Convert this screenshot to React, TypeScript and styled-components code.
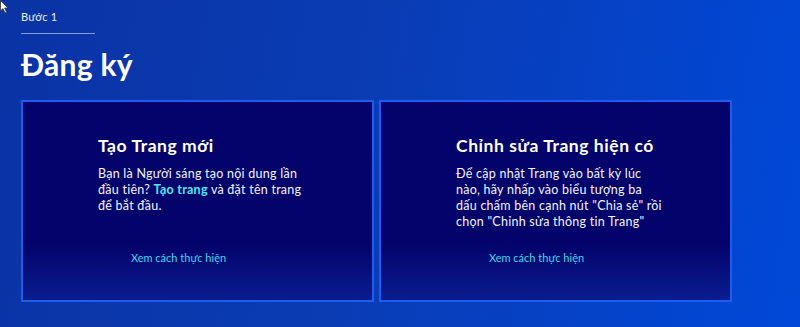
import React from 'react';
import styled, { createGlobalStyle } from 'styled-components';

const GlobalStyle = createGlobalStyle`
  html, body {
    margin: 0;
    padding: 0;
    height: 100%;
  }
  body {
    font-family: 'Lato', 'Noto Sans', sans-serif;
    -webkit-font-smoothing: antialiased;
  }
`;

const Page = styled.div`
  position: relative;
  width: 800px;
  height: 327px;
  overflow: hidden;
  box-sizing: border-box;
  padding: 10px 0 0 21px;
  color: #ffffff;
  background: linear-gradient(100deg, #0a33a4 0%, #0a3cb4 45%, #0048d8 100%);
`;

const Cursor = styled.svg`
  position: absolute;
  left: 0;
  top: 0;
`;

const StepLabel = styled.div`
  font-size: 11px;
  line-height: 14px;
  letter-spacing: 0.2px;
  color: #e8eeff;
`;

const Rule = styled.div`
  width: 74px;
  height: 1px;
  margin-top: 9px;
  background: rgba(200, 215, 255, 0.65);
`;

const Heading = styled.h1`
  margin: 10px 0 0;
  font-size: 30px;
  line-height: 40px;
  font-weight: 700;
  letter-spacing: 0.3px;
`;

const CardRow = styled.div`
  display: flex;
  gap: 5px;
  margin-top: 16px;
`;

const Card = styled.section`
  display: flex;
  flex-direction: column;
  box-sizing: border-box;
  width: 353px;
  height: 202px;
  padding: 33px 20px 35px 75px;
  border: 2px solid #1d5cf0;
  background: linear-gradient(180deg, #03036b 0%, #03036b 72%, #0a1c8e 100%);
`;

const CardTitle = styled.h2`
  margin: 0;
  font-size: 17.5px;
  line-height: 22px;
  font-weight: 700;
  letter-spacing: 0.55px;
`;

const CardText = styled.p`
  margin: 9px 0 0;
  max-width: 207px;
  font-size: 12.5px;
  line-height: 16px;
  letter-spacing: 0.25px;
  color: #f2f4ff;
`;

const Highlight = styled.span`
  color: #4fe8ef;
  font-weight: 700;
`;

const HowLink = styled.a<{ $indent: number }>`
  margin-top: auto;
  padding-left: ${p => p.$indent}px;
  font-size: 11px;
  line-height: 14px;
  color: #3fd6e6;
  text-decoration: none;
`;

const App: React.FC = () => (
  <>
    <GlobalStyle />
    <Page>
      <Cursor width="10" height="14" viewBox="0 0 10 14">
        <path d="M0.5 0.5 L0.5 11 L3 8.6 L5 13 L6.6 12.3 L4.7 8 L8 8 Z" fill="#ffffff" stroke="#333" strokeWidth="0.8" />
      </Cursor>
      <StepLabel>Bước 1</StepLabel>
      <Rule />
      <Heading>Đăng ký</Heading>
      <CardRow>
        <Card>
          <CardTitle>Tạo Trang mới</CardTitle>
          <CardText>
            Bạn là Người sáng tạo nội dung lần đầu tiên? <Highlight>Tạo trang</Highlight> và đặt tên trang để bắt đầu.
          </CardText>
          <HowLink href="#" $indent={33}>Xem cách thực hiện</HowLink>
        </Card>
        <Card>
          <CardTitle>Chỉnh sửa Trang hiện có</CardTitle>
          <CardText>
            Để cập nhật Trang vào bất kỳ lúc nào, hãy nhấp vào biểu tượng ba dấu chấm bên cạnh nút "Chia sẻ" rồi chọn "Chỉnh sửa thông tin Trang"
          </CardText>
          <HowLink href="#" $indent={33}>Xem cách thực hiện</HowLink>
        </Card>
      </CardRow>
    </Page>
  </>
);

export default App;
